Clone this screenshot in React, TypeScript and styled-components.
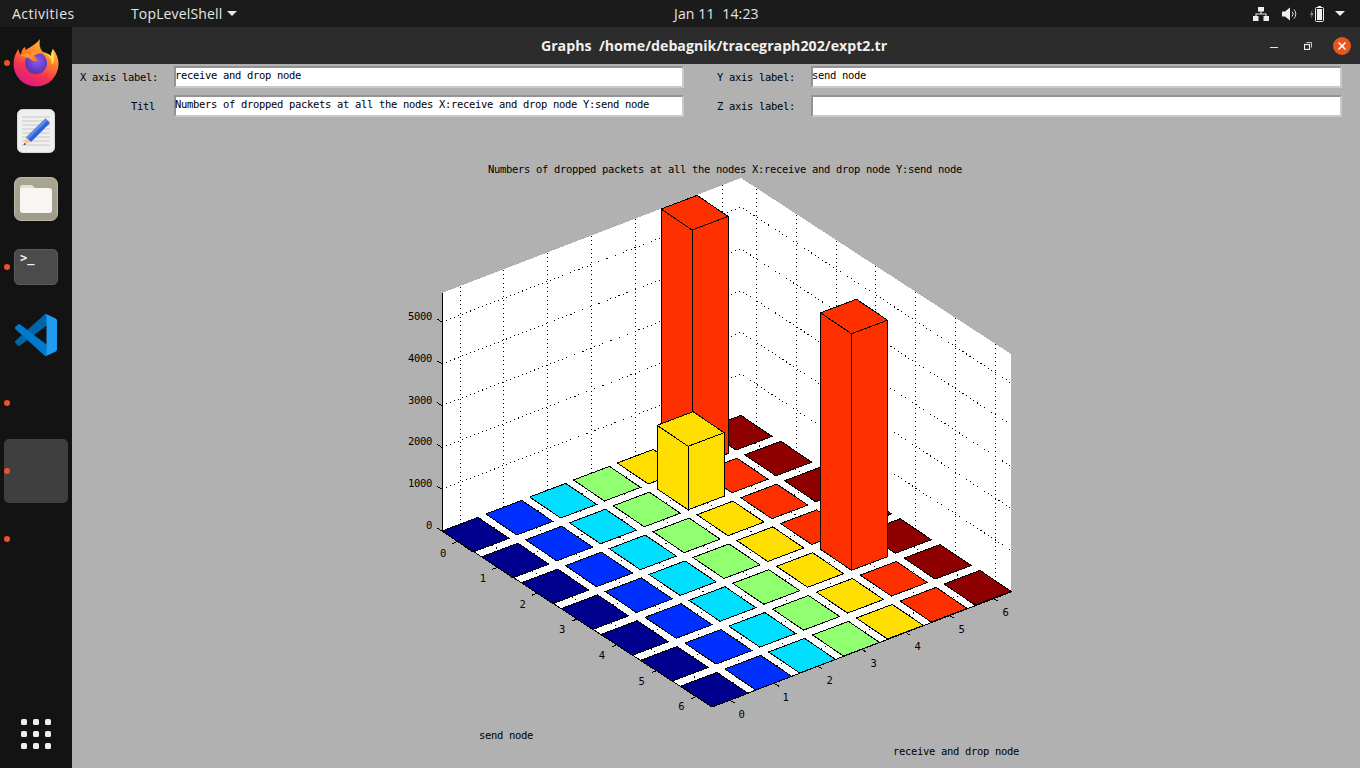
import React from "react";
import styled, { createGlobalStyle } from "styled-components";

const Global = createGlobalStyle`
  html, body { margin: 0; padding: 0; background: #131313; }
  #root { width: 1360px; height: 768px; overflow: hidden; }
`;

const Screen = styled.div`
  width: 1360px; height: 768px; display: flex; flex-direction: column; overflow: hidden;
  font-family: "Open Sans", "Noto Sans", sans-serif;
`;
const TopBar = styled.header`
  height: 27px; flex: none; background: #1b1b1b; color: #e6e6e6; font-size: 14px;
  display: grid; grid-template-columns: 662px auto 1fr; align-items: center;
  padding: 0 15px 0 12px; box-sizing: content-box; width: 1333px;
`;
const TopLeft = styled.div`display: flex; align-items: center;`;
const Activities = styled.span`width: 119px; letter-spacing: 0.5px;`;
const AppMenu = styled.span`display: flex; align-items: center; gap: 5px; letter-spacing: 0.15px;`;
const Caret = styled.i`
  display: block; width: 0; height: 0; border-left: 5px solid transparent; border-right: 5px solid transparent;
  border-top: 5px solid #e6e6e6; font-style: normal;
`;
const Clock = styled.span`white-space: pre; letter-spacing: 0.15px;`;
const Status = styled.div`display: flex; align-items: center; justify-self: end;`;
const StatusIcon = styled.svg<{ $gap: number }>`margin-left: ${p => p.$gap}px; display: block; flex: none;`;

const Body = styled.div`flex: 1; display: flex; min-height: 0;`;
const Dock = styled.nav`
  width: 72px; flex: none; background: #131313; display: flex; flex-direction: column; padding-top: 2px; box-sizing: border-box;
`;
const DockItem = styled.div<{ $active?: boolean }>`
  position: relative; height: 68px; flex: none; display: flex; align-items: center; justify-content: center;
  &::before {
    content: ""; display: ${p => (p.$active ? "block" : "none")};
    position: absolute; left: 4px; top: 2px; width: 64px; height: 64px; border-radius: 5px; background: #3f3f3f;
  }
`;
const RunDot = styled.span`
  position: absolute; left: 4px; top: 31px; width: 6px; height: 6px; border-radius: 50%; background: #e95420;
`;
const AppsItem = styled(DockItem)`margin-top: auto;`;
const AppsGrid = styled.div`
  display: grid; grid-template-columns: repeat(3, 6px); grid-auto-rows: 6px; gap: 6px;
`;
const AppsDot = styled.span`border-radius: 1.5px; background: #eeeeee;`;
const FilesTile = styled.div`
  width: 44px; height: 44px; box-sizing: border-box; border-radius: 7px; border: 1px solid #bdb9a8;
  background: linear-gradient(#aaa694, #a09b89); display: flex; align-items: center; justify-content: center;
`;
const TerminalTile = styled.div`
  width: 44px; height: 36px; box-sizing: border-box; border-radius: 5px; background: #4b4b4b; border: 1px solid #5a5a5a;
  color: #f2f2f2; font: 700 12px/12px "DejaVu Sans Mono", monospace; padding: 2px 0 0 5px;
`;

const Win = styled.main`flex: 1; min-width: 0; display: flex; flex-direction: column; background: #b1b1b1;`;
const TitleBar = styled.div`
  height: 37px; flex: none; background: #2c2c2c; display: grid; grid-template-columns: 1fr auto 1fr; align-items: center;
  color: #f0f0f0;
`;
const WinTitle = styled.span`
  grid-column: 2; font: 700 14.2px "Open Sans", "Noto Sans", sans-serif; white-space: pre; position: relative; left: -2px;
`;
const WinControls = styled.div`grid-column: 3; justify-self: end; display: flex; align-items: center; padding-right: 8px;`;
const CtlMin = styled.span`width: 8px; height: 1px; background: #e4e4e4; margin: 4px 0 0 0;`;
const CtlRestore = styled.svg`display: block; margin-left: 26px;`;
const CtlClose = styled.svg`display: block; margin-left: 20px;`;

const MONO = `"DejaVu Sans Mono", "Liberation Mono", monospace`;

const Form = styled.div`
  flex: none; display: grid; grid-template-columns: 102px 510px 127px 531px; grid-auto-rows: 22px; row-gap: 7px;
  padding-top: 2px; font: 10.5px/22px ${MONO}; letter-spacing: -0.32px; color: #000;
`;
const FieldLabel = styled.label<{ $pad?: number }>`
  text-align: right; padding-right: ${p => p.$pad ?? 16}px; white-space: pre;
`;
const TextBox = styled.div`
  box-sizing: border-box; height: 22px; background: #fff; white-space: pre; text-indent: -1px;
  border-style: solid; border-width: 2px; border-color: #939393 #c9c9c9 #c9c9c9 #939393; line-height: 15px;
`;

const Plot = styled.div`flex: 1; min-height: 0;`;
const PlotSvg = styled.svg`display: block; width: 100%; height: 100%;`;
const PlotText = styled.text`font: 10.5px ${MONO}; letter-spacing: -0.32px; fill: #000;`;

type P = [number, number];
const O: P = [442, 531];
const U: P = [43.83, -17];
const V: P = [39.83, 25.83];
const tu: P = [36, -13.6];
const tv: P = [31, 21];
const add = (a: P, b: P, s = 1): P => [a[0] + b[0] * s, a[1] + b[1] * s];
const pts = (l: P[]) => l.map(p => `${p[0].toFixed(1)},${p[1].toFixed(1)}`).join(" ");

const COLORS = ["#00008f", "#0030ff", "#00dfff", "#90ff70", "#ffdf00", "#ff3000", "#8f0000"];
const HEIGHTS: Record<string, number> = { "5,0": 237, "4,1": 63.5, "5,4": 236.5 };

const corners = (i: number, j: number) => {
  const L = add(add(O, U, i), V, j);
  return { L, T: add(L, tu), B: add(L, tv), R: add(add(L, tu), tv) };
};
const up = (p: P, h: number): P => [p[0], p[1] - h];

const cells: { i: number; j: number }[] = [];
for (let i = 0; i < 7; i++) for (let j = 0; j < 7; j++) cells.push({ i, j });
cells.sort((a, b) => a.j - a.i - (b.j - b.i));

const BACK: P = [741, 416];
const RIGHT: P = [1011, 592];
const BOTTOM: P = [712, 707];
const TOPH = 238;
const ZS = [0, 1, 2, 3, 4, 5];
const IDX = [0, 1, 2, 3, 4, 5, 6];

function Chart() {
  return (
    <PlotSvg viewBox="72 117 1288 651">
      <g shapeRendering="crispEdges">
        <polygon points={pts([O, up(O, TOPH), up(BACK, TOPH), BACK])} fill="#fff" />
        <polygon points={pts([BACK, up(BACK, TOPH), up(RIGHT, TOPH), RIGHT])} fill="#fff" />
        <polygon points={pts([O, BACK, RIGHT, BOTTOM])} fill="#fff" />
        <g stroke="#000" strokeWidth={1} strokeDasharray="1 3.3" fill="none">
          {ZS.slice(1).map(z => {
            const h = z * 41.8;
            return <polyline key={z} points={pts([up(O, h), up(BACK, h), up(RIGHT, h)])} />;
          })}
          {IDX.map(k => {
            const a = add(add(O, U, k), tu, 0.5);
            const b = add(a, [270, 176]);
            return (
              <g key={k}>
                <line x1={a[0]} y1={a[1]} x2={a[0]} y2={a[1] - TOPH} />
                <line x1={a[0]} y1={a[1]} x2={b[0]} y2={b[1]} />
              </g>
            );
          })}
          {IDX.map(k => {
            const a = add(add(O, V, k), tv, 0.5);
            const w = add(a, [299, -115]);
            return (
              <g key={k}>
                <line x1={w[0]} y1={w[1]} x2={w[0]} y2={w[1] - TOPH} />
                <line x1={a[0]} y1={a[1]} x2={w[0]} y2={w[1]} />
              </g>
            );
          })}
        </g>
        <g stroke="#000" strokeWidth={1} strokeLinejoin="miter">
          {cells.map(({ i, j }) => {
            const { L, T, B, R } = corners(i, j);
            const h = HEIGHTS[`${i},${j}`] ?? 0;
            const fill = COLORS[i];
            if (!h) return <polygon key={`${i}-${j}`} points={pts([L, T, R, B])} fill={fill} />;
            return (
              <g key={`${i}-${j}`} fill={fill}>
                <polygon points={pts([L, B, up(B, h), up(L, h)])} />
                <polygon points={pts([B, R, up(R, h), up(B, h)])} />
                <polygon points={pts([up(L, h), up(T, h), up(R, h), up(B, h)])} />
              </g>
            );
          })}
        </g>
        <g stroke="#000" strokeWidth={1} fill="none">
          <line x1={442} y1={293} x2={442} y2={531} />
          <line x1={O[0]} y1={O[1]} x2={BOTTOM[0]} y2={BOTTOM[1]} />
          <line x1={BOTTOM[0]} y1={BOTTOM[1]} x2={RIGHT[0]} y2={RIGHT[1]} />
          {ZS.map(z => {
            const y = 531 - z * 41.8;
            return <line key={z} x1={442} y1={y} x2={437} y2={y - 3} />;
          })}
          {IDX.map(k => {
            const a = add(add(O, V, k), tv, 0.5);
            const b = add(add(BOTTOM, U, k), tu, 0.5);
            return (
              <g key={k}>
                <line x1={a[0]} y1={a[1]} x2={a[0] - 5} y2={a[1] + 2} />
                <line x1={b[0]} y1={b[1]} x2={b[0] + 5} y2={b[1] + 3} />
              </g>
            );
          })}
        </g>
      </g>
      <PlotText x={488} y={173}>Numbers of dropped packets at all the nodes X:receive and drop node Y:send node</PlotText>
      {ZS.map(z => (
        <PlotText key={z} x={432} y={529 - z * 41.8} textAnchor="end">{z * 1000}</PlotText>
      ))}
      {IDX.map(k => (
        <PlotText key={k} x={443 + k * 39.7} y={556.5 + k * 25.6} textAnchor="middle">{k}</PlotText>
      ))}
      {IDX.map(k => (
        <PlotText key={k} x={741.5 + k * 44} y={717.5 - k * 16.9} textAnchor="middle">{k}</PlotText>
      ))}
      <PlotText x={479} y={739}>send node</PlotText>
      <PlotText x={893} y={755}>receive and drop node</PlotText>
    </PlotSvg>
  );
}

const Firefox = () => (
  <svg width="46" height="50" viewBox="0 0 46 50">
    <defs>
      <linearGradient id="ffBody" x1="0.8" y1="0" x2="0.3" y2="1">
        <stop offset="0" stopColor="#ffd23e" />
        <stop offset="0.35" stopColor="#ff8a2a" />
        <stop offset="0.7" stopColor="#f5314f" />
        <stop offset="1" stopColor="#d81a8c" />
      </linearGradient>
      <linearGradient id="ffFlame" x1="0" y1="0" x2="1" y2="1">
        <stop offset="0" stopColor="#ffb52e" />
        <stop offset="1" stopColor="#ff6a20" />
      </linearGradient>
      <radialGradient id="ffGlobe" cx="0.55" cy="0.4" r="0.7">
        <stop offset="0" stopColor="#8a5cf0" />
        <stop offset="1" stopColor="#4f2aa8" />
      </radialGradient>
    </defs>
    <path fill="url(#ffBody)" d="M27 1c-1 5-1 9 3 13 3 1 6 2 8 4 0-3 1-5 2-7 4 5 5.500 10 5.500 15A22.500 22.500 0 0 1 .5 26c0-6 2-11 5-15 .5 3 1 4 2.500 6C12 10 21 9 27 1z" />
    <path fill="#ffd84a" d="M27 1c-1 5-1 9 3 13 4 2 9 6 9 13 3-3 3-10 1-16-1 2-2 4-2 7-2-2-5-3-8-4-3-3-4-7-3-13z" />
    <circle cx="23" cy="25" r="11" fill="url(#ffGlobe)" />
    <path fill="url(#ffFlame)" d="M7 18c3-2 7-3 10-2 4-4 10-3 14 0-4-1-8 0-10 2 2 1 3 3 3 5-3 1-5 0-7-2-2-1-6-3-10-3z" />
    <path fill="#ff7a1f" d="M8 17c0-4 2-7 4-8 0 3 2 5 5 7-3-1-6 0-9 1z" />
  </svg>
);

const TextEditor = () => (
  <svg width="38" height="44" viewBox="0 0 38 44">
    <rect x="0.500" y="0.500" width="37" height="43" rx="5" fill="#efefef" stroke="#d9d9d9" />
    <g stroke="#c8c8c8" strokeWidth="1">
      {[8, 12, 16, 20, 24, 28, 32, 36].map(y => <line key={y} x1="5" y1={y} x2="33" y2={y} />)}
    </g>
    <path fill="#2f62d8" d="M28.500 9.500l4.500 4.500L14 33l-5-4.500z" />
    <path fill="#5b8cf0" d="M28.500 9.500l2 2L11 30.500l-2-2z" />
    <path fill="#f4c9a0" d="M9 28.500l5 4.500-7.500 3z" />
    <path fill="#333" d="M7.500 34l1.500 1.300-2.500 1z" />
  </svg>
);

const VSCode = () => (
  <svg width="42" height="42" viewBox="0 0 100 100">
    <path fill="#0065A9" d="M96.460 10.800 75.860.900a6.220 6.220 0 0 0-7.100 1.200L1.340 63.600a4.170 4.170 0 0 0 0 6.160l5.510 5.010a4.170 4.170 0 0 0 5.320.24L93.400 13.400c2.730-2.070 6.600-.13 6.600 3.300v-.24a6.250 6.250 0 0 0-3.540-5.660z" />
    <path fill="#007ACC" d="M96.460 89.200 75.860 99.100a6.220 6.220 0 0 1-7.100-1.200L1.340 36.400a4.170 4.170 0 0 1 0-6.160l5.510-5.010a4.170 4.170 0 0 1 5.320-.24L93.400 86.600c2.730 2.070 6.600.13 6.600-3.300v.24a6.250 6.250 0 0 1-3.540 5.660z" />
    <path fill="#1F9CF0" d="M75.860 99.100a6.220 6.220 0 0 1-7.110-1.210c2.300 2.300 6.250.67 6.250-2.590V4.700c0-3.260-3.950-4.890-6.250-2.590a6.220 6.220 0 0 1 7.110-1.210l20.600 9.900A6.250 6.250 0 0 1 100 16.430v67.140a6.250 6.250 0 0 1-3.540 5.630z" />
  </svg>
);

const Folder = () => (
  <svg width="32" height="28" viewBox="0 0 32 28">
    <path fill="#e4e1da" d="M0 3a3 3 0 0 1 3-3h9l4 4v6H0z" />
    <rect y="3" width="32" height="25" rx="3" fill="#f8f6f3" />
  </svg>
);

export default function App() {
  return (
    <Screen>
      <Global />
      <TopBar>
        <TopLeft>
          <Activities>Activities</Activities>
          <AppMenu>TopLevelShell<Caret /></AppMenu>
        </TopLeft>
        <Clock>Jan 11  14:23</Clock>
        <Status>
          <StatusIcon $gap={0} width="16" height="14" viewBox="0 0 16 14" fill="#eee">
            <rect x="5" y="0" width="6" height="4.500" />
            <rect x="0" y="9" width="5.500" height="5" />
            <rect x="10.500" y="9" width="5.500" height="5" />
            <path d="M7.500 4h1v2.500h5V9h-1V7.500h-9V9h-1V6.500h5z" />
          </StatusIcon>
          <StatusIcon $gap={13} width="15" height="14" viewBox="0 0 15 14" fill="none">
            <path fill="#eee" d="M0 4.500h3L8 .500v13l-5-4H0z" />
            <path stroke="#ddd" strokeWidth="1" d="M10 4.500a3.500 3.500 0 0 1 0 5M12 2.500a6.500 6.500 0 0 1 0 9" />
          </StatusIcon>
          <StatusIcon $gap={13} width="15" height="16" viewBox="0 0 15 16" fill="none">
            <path fill="#888" d="M2.500 3L0 9h1.500L1 13l2.500-6H2z" />
            <rect x="5.500" y="1.500" width="8" height="14" rx="1" stroke="#eee" strokeWidth="1" />
            <rect x="7" y="3" width="5" height="11" fill="#eee" />
            <rect x="8" y="0" width="3" height="1.500" fill="#eee" />
          </StatusIcon>
          <StatusIcon $gap={10} width="10" height="5" viewBox="0 0 10 5">
            <path fill="#eee" d="M0 0h10L5 5z" />
          </StatusIcon>
        </Status>
      </TopBar>
      <Body>
        <Dock>
          <DockItem><RunDot /><Firefox /></DockItem>
          <DockItem><TextEditor /></DockItem>
          <DockItem><FilesTile><Folder /></FilesTile></DockItem>
          <DockItem><RunDot /><TerminalTile>&gt;_</TerminalTile></DockItem>
          <DockItem><VSCode /></DockItem>
          <DockItem><RunDot /></DockItem>
          <DockItem $active><RunDot /></DockItem>
          <DockItem><RunDot /></DockItem>
          <AppsItem>
            <AppsGrid>
              {Array.from({ length: 9 }, (_, i) => <AppsDot key={i} />)}
            </AppsGrid>
          </AppsItem>
        </Dock>
        <Win>
          <TitleBar>
            <WinTitle>Graphs  /home/debagnik/tracegraph202/expt2.tr</WinTitle>
            <WinControls>
              <CtlMin />
              <CtlRestore width="8" height="8" viewBox="0 0 8 8" fill="none" stroke="#ececec">
                <rect x="0.500" y="2.500" width="5" height="5" strokeWidth="1.200" />
                <path d="M2.500.5h5v5" strokeWidth="0.800" />
              </CtlRestore>
              <CtlClose width="20" height="20" viewBox="0 0 20 20">
                <circle cx="10" cy="10" r="9" fill="#e95420" />
                <path d="M6.500 6.500l7 7M13.500 6.500l-7 7" stroke="#fff" strokeWidth="1.600" />
              </CtlClose>
            </WinControls>
          </TitleBar>
          <Form>
            <FieldLabel>X axis label:</FieldLabel>
            <TextBox>receive and drop node</TextBox>
            <FieldLabel>Y axis label:</FieldLabel>
            <TextBox>send node</TextBox>
            <FieldLabel $pad={19}>Titl</FieldLabel>
            <TextBox>Numbers of dropped packets at all the nodes X:receive and drop node Y:send node</TextBox>
            <FieldLabel>Z axis label:</FieldLabel>
            <TextBox />
          </Form>
          <Plot><Chart /></Plot>
        </Win>
      </Body>
    </Screen>
  );
}
